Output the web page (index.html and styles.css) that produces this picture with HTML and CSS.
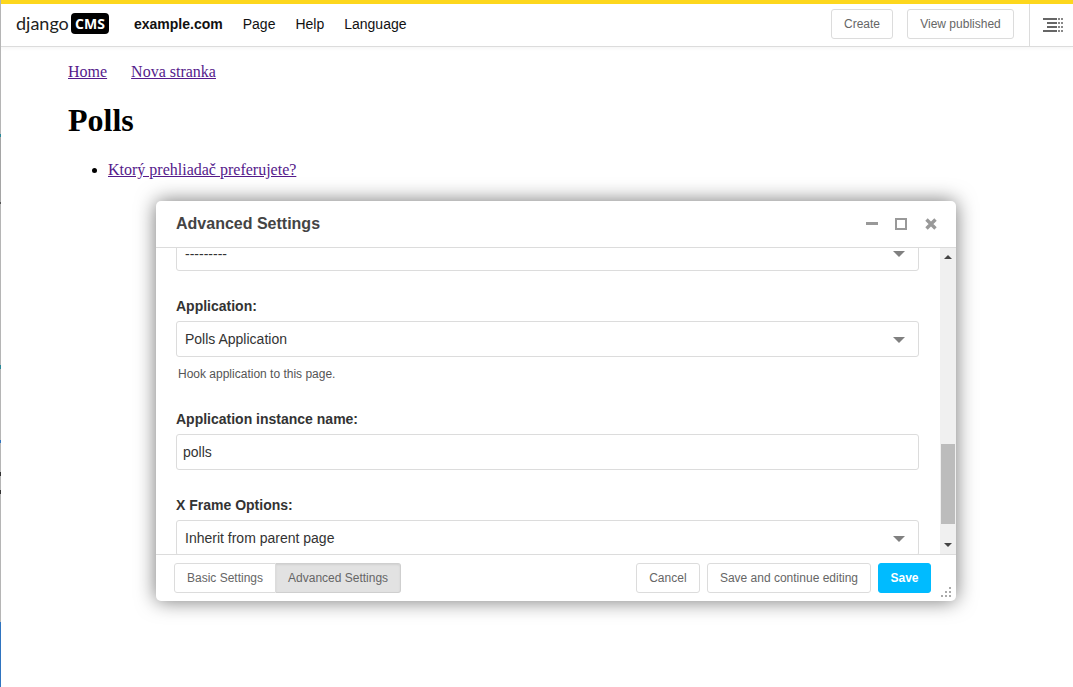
FILE: index.html
```html
<!DOCTYPE html>
<html lang="en">
<head>
  <meta charset="UTF-8">
  <title>Polls</title>
  <link rel="stylesheet" href="styles.css">
</head>
<body>

  <div class="edge"></div>

  <header class="toolbar">
    <div class="logo"><span class="logo-word">django</span><span class="logo-box">CMS</span></div>
    <nav class="menu">
      <span class="menu-site">example.com</span>
      <span>Page</span>
      <span>Help</span>
      <span>Language</span>
    </nav>
    <div class="toolbar-right">
      <button class="btn btn-create">Create</button>
      <button class="btn btn-view">View published</button>
      <div class="toolbar-toggle">
        <svg width="20" height="14" viewBox="0 0 20 14">
          <g fill="#666">
            <rect x="0" y="0" width="14" height="2"/>
            <rect x="4" y="4" width="10" height="2"/>
            <rect x="4" y="8" width="10" height="2"/>
            <rect x="0" y="12" width="14" height="2"/>
          </g>
          <g fill="#888">
            <rect x="15" y="0" width="2" height="2"/><rect x="18" y="0" width="2" height="2"/>
            <rect x="15" y="4" width="2" height="2"/><rect x="18" y="4" width="2" height="2"/>
            <rect x="15" y="8" width="2" height="2"/><rect x="18" y="8" width="2" height="2"/>
            <rect x="15" y="12" width="2" height="2"/><rect x="18" y="12" width="2" height="2"/>
          </g>
        </svg>
      </div>
    </div>
  </header>

  <main class="page">
    <div class="page-nav">
      <a href="#">Home</a>
      <a href="#">Nova stranka</a>
    </div>
    <h1>Polls</h1>
    <ul>
      <li><a href="#">Ktorý prehliadač preferujete?</a></li>
    </ul>
  </main>

  <section class="modal">
    <div class="modal-head">
      <div class="modal-title">Advanced Settings</div>
      <div class="modal-icons">
        <svg width="12" height="12" viewBox="0 0 12 12"><rect x="0" y="4" width="12" height="3" fill="#999"/></svg>
        <svg width="12" height="12" viewBox="0 0 12 12"><rect x="1" y="1" width="10" height="10" fill="none" stroke="#999" stroke-width="2"/></svg>
        <svg width="14" height="14" viewBox="0 0 14 14"><path d="M2.5 2.5 L11.5 11.5 M11.5 2.5 L2.5 11.5" stroke="#999" stroke-width="3.4" fill="none"/></svg>
      </div>
    </div>

    <div class="modal-body">
      <div class="modal-form">
        <div class="field field-first">
          <div class="select select-first">---------<span class="arrow"></span></div>
        </div>
        <div class="field field-app">
          <label>Application:</label>
          <div class="select">Polls Application<span class="arrow"></span></div>
          <p class="help">Hook application to this page.</p>
        </div>
        <div class="field field-instance">
          <label>Application instance name:</label>
          <div class="select select-input">polls</div>
        </div>
        <div class="field field-frame">
          <label>X Frame Options:</label>
          <div class="select">Inherit from parent page<span class="arrow"></span></div>
        </div>
      </div>
      <div class="scrollbar">
        <span class="scroll-up"></span>
        <div class="scroll-track"><div class="scroll-thumb"></div></div>
        <span class="scroll-down"></span>
      </div>
    </div>

    <div class="modal-foot">
      <div class="tabs">
        <button class="tab">Basic Settings</button>
        <button class="tab tab-active">Advanced Settings</button>
      </div>
      <div class="actions">
        <button class="btn btn-cancel">Cancel</button>
        <button class="btn">Save and continue editing</button>
        <button class="btn btn-save">Save</button>
      </div>
      <svg class="grip" width="12" height="10" viewBox="0 0 12 10">
        <g fill="#aaa">
          <rect x="9" y="0" width="2" height="2"/>
          <rect x="5" y="4" width="2" height="2"/><rect x="9" y="4" width="2" height="2"/>
          <rect x="1" y="8" width="2" height="2"/><rect x="5" y="8" width="2" height="2"/><rect x="9" y="8" width="2" height="2"/>
        </g>
      </svg>
    </div>
  </section>

</body>
</html>
```

FILE: styles.css
```css
html, body {
  height: 100%;
}

body {
  margin: 0;
  background-color: #fff;
  font-family: "Liberation Serif", serif;
  font-size: 16px;
  color: #000;
  overflow: hidden;
}

/* bit of another window showing along the left side */
.edge {
  position: absolute;
  left: 0;
  top: 0;
  bottom: 0;
  width: 1px;
  background: linear-gradient(to bottom,
    #b5b5b5 0, #b5b5b5 134px, #2a8a9a 134px, #2a8a9a 137px,
    #a5a5a5 137px, #a5a5a5 202px, #555 202px, #555 204px,
    #b5b5b5 204px, #b5b5b5 365px, #2a8a9a 365px, #2a8a9a 369px,
    #b5b5b5 369px, #b5b5b5 440px, #2f74c0 440px, #2f74c0 443px,
    #b5b5b5 443px, #b5b5b5 472px, #333 472px, #333 476px,
    #b5b5b5 476px, #b5b5b5 490px, #333 490px, #333 494px,
    #b5b5b5 494px, #b5b5b5 622px, #2f74c0 622px, #2f74c0 100%);
}

.toolbar {
  display: flex;
  align-items: center;
  height: 42px;
  border-top: 4px solid #fdd71d;
  border-bottom: 1px solid #dcdcdc;
  box-shadow: 0 1px 4px rgba(0,0,0,0.05);
  padding-left: 16px;
  font-family: "Liberation Sans", sans-serif;
  font-size: 14px;
  box-sizing: content-box;
}

.logo {
  display: flex;
  align-items: center;
  width: 118px;
  margin-bottom: 4px;
}

.logo-word {
  font-family: "Lato", sans-serif;
  font-size: 18px;
  color: #222;
  width: 55px;
}

.logo-box {
  background-color: #000;
  color: #fff;
  border-radius: 4px;
  width: 38px;
  height: 21px;
  line-height: 21px;
  text-align: center;
  font-family: "Open Sans", sans-serif;
  font-size: 14px;
  font-weight: 700;
}

.menu {
  display: flex;
  gap: 20px;
  margin-bottom: 2px;
  color: #111;
}

.menu-site {
  font-weight: bold;
}

.toolbar-right {
  display: flex;
  align-items: center;
  gap: 14px;
  margin-left: auto;
  height: 100%;
}

.toolbar-right .btn {
  margin-bottom: 2px;
}

.toolbar-toggle {
  display: flex;
  align-items: center;
  justify-content: center;
  width: 44px;
  height: 100%;
  padding-left: 3px;
  box-sizing: border-box;
  margin-left: 1px;
  border-left: 1px solid #dcdcdc;
}

.btn {
  height: 30px;
  padding: 0 12px;
  background-color: #fff;
  border: 1px solid #dcdcdc;
  border-radius: 3px;
  font-family: "Liberation Sans", sans-serif;
  font-size: 12px;
  color: #666;
}

.btn-create {
  width: 62px;
  padding: 0;
}

.btn-view {
  width: 107px;
  padding: 0;
}

.btn-cancel {
  width: 64px;
  padding: 0;
}

.btn-save {
  width: 53px;
  padding: 0;
  background-color: #00bbff;
  border-color: #00bbff;
  color: #fff;
  font-weight: bold;
}

.page {
  padding: 16px 68px 0;
}

.page-nav {
  display: flex;
  gap: 24px;
  line-height: 18px;
}

h1 {
  margin: 21px 0 0;
  font-size: 32px;
  line-height: 37px;
}

ul {
  margin: 22px 0 0;
  padding-left: 40px;
}

a {
  color: #551a8b;
}

.modal {
  position: absolute;
  left: 156px;
  top: 201px;
  width: 800px;
  height: 400px;
  display: flex;
  flex-direction: column;
  background-color: #fff;
  border-radius: 5px;
  box-shadow: 0 0 20px rgba(0,0,0,0.55);
  font-family: "Liberation Sans", sans-serif;
  overflow: hidden;
}

.modal-head {
  display: flex;
  align-items: center;
  justify-content: space-between;
  height: 46px;
  flex-shrink: 0;
  padding: 0 18px 0 20px;
  border-bottom: 1px solid #dcdcdc;
}

.modal-title {
  font-size: 16px;
  font-weight: bold;
  color: #444;
}

.modal-icons {
  display: flex;
  align-items: center;
  gap: 17px;
}

.modal-body {
  display: flex;
  flex: 1;
  overflow: hidden;
}

.modal-form {
  flex: 1;
  padding: 0 21px 0 20px;
  overflow: hidden;
}

.field label {
  display: block;
  font-size: 14px;
  font-weight: bold;
  line-height: 16px;
  color: #333;
  margin-bottom: 7px;
}

.field-first {
  margin-top: -13px;
}

.field-app {
  margin-top: 27px;
}

.field-instance {
  margin-top: 30px;
}

.field-frame {
  margin-top: 27px;
}

.select {
  position: relative;
  height: 34px;
  line-height: 34px;
  padding: 0 8px;
  border: 1px solid #dcdcdc;
  border-radius: 3px;
  font-size: 14px;
  color: #333;
}

.select-first {
  line-height: 36px;
}

.select-input {
  padding: 0 6px;
}

.arrow {
  position: absolute;
  right: 13px;
  top: 15px;
  border-top: 6px solid #808080;
  border-left: 6px solid transparent;
  border-right: 6px solid transparent;
}

.help {
  margin: 10px 0 0 2px;
  font-size: 12px;
  line-height: 14px;
  color: #555;
}

.scrollbar {
  display: flex;
  flex-direction: column;
  align-items: center;
  width: 16px;
  flex-shrink: 0;
  background-color: #f0f0f0;
}

.scroll-track {
  flex: 1;
  width: 100%;
  padding-top: 185px;
  box-sizing: border-box;
}

.scroll-thumb {
  width: 14px;
  height: 80px;
  margin: 0 auto;
  background-color: #bcbcbc;
}

.scroll-up {
  margin: 7px 0 0;
  border-bottom: 4px solid #444;
  border-left: 4px solid transparent;
  border-right: 4px solid transparent;
}

.scroll-down {
  margin: 0 0 7px;
  border-top: 4px solid #444;
  border-left: 4px solid transparent;
  border-right: 4px solid transparent;
}

.modal-foot {
  position: relative;
  display: flex;
  align-items: center;
  justify-content: space-between;
  height: 46px;
  flex-shrink: 0;
  padding: 0 25px 0 18px;
  border-top: 1px solid #dcdcdc;
}

.tabs {
  display: flex;
}

.tab {
  height: 30px;
  padding: 0 12px;
  background-color: #fff;
  border: 1px solid #dcdcdc;
  border-radius: 3px 0 0 3px;
  font-family: "Liberation Sans", sans-serif;
  font-size: 12px;
  color: #666;
}

.tab-active {
  background-color: #e2e2e2;
  border-color: #cfcfcf;
  border-left: 0;
  border-radius: 0 3px 3px 0;
  box-shadow: inset 0 1px 2px rgba(0,0,0,0.08);
}

.actions {
  display: flex;
  gap: 7px;
}

.grip {
  position: absolute;
  right: 4px;
  bottom: 4px;
}
```
